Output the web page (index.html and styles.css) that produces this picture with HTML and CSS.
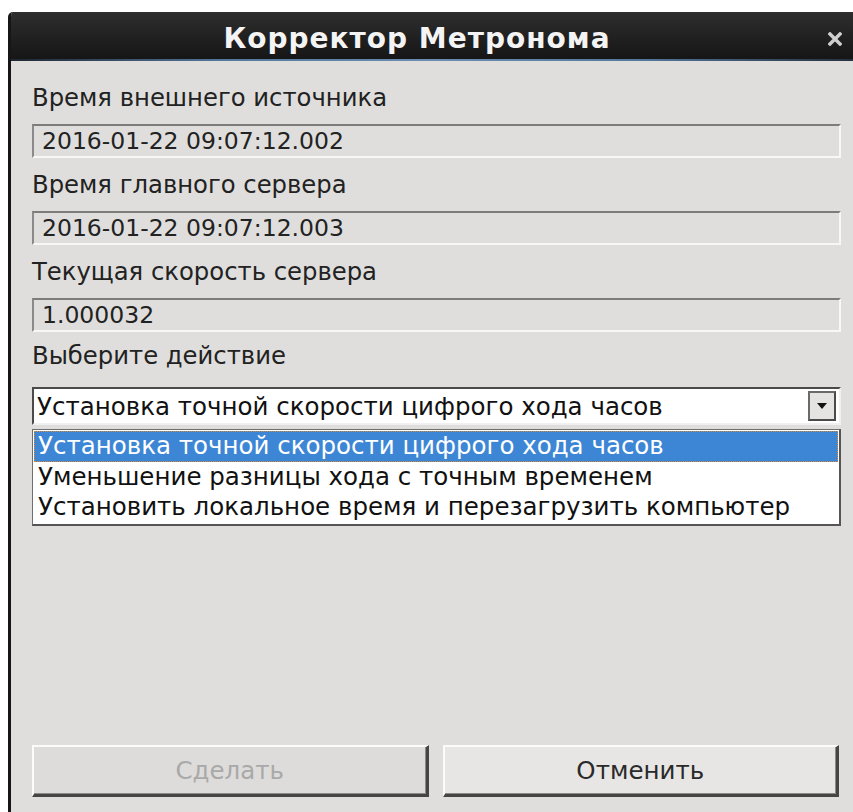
FILE: index.html
```html
<!DOCTYPE html>
<html lang="ru">
<head>
<meta charset="utf-8">
<title>Корректор Метронома</title>
<link rel="stylesheet" href="styles.css">
</head>
<body>
<div class="window">
  <div class="titlebar">
    <span class="title">Корректор Метронома</span>
    <span class="close" aria-label="Закрыть">
      <svg width="14" height="14" viewBox="0 0 14 14"><path d="M2 2 L12 12 M12 2 L2 12" stroke="#cfcfcf" stroke-width="3.4" stroke-linecap="square" fill="none"/></svg>
    </span>
  </div>
  <div class="content">
    <div class="label first">Время внешнего источника</div>
    <div class="field">2016-01-22 09:07:12.002</div>
    <div class="label">Время главного сервера</div>
    <div class="field">2016-01-22 09:07:12.003</div>
    <div class="label">Текущая скорость сервера</div>
    <div class="field">1.000032</div>
    <div class="label action">Выберите действие</div>
    <div class="combo">
      <span class="combo-text">Установка точной скорости цифрого хода часов</span>
      <span class="combo-btn"><svg width="12" height="8" viewBox="0 0 12 8"><path d="M1 1 L11 1 L6 7 Z" fill="#111"/></svg></span>
    </div>
    <ul class="options">
      <li class="selected">Установка точной скорости цифрого хода часов</li>
      <li>Уменьшение разницы хода с точным временем</li>
      <li>Установить локальное время и перезагрузить компьютер</li>
    </ul>
    <div class="buttons">
      <button class="btn disabled" disabled>Сделать</button>
      <button class="btn">Отменить</button>
    </div>
  </div>
</div>
</body>
</html>
```
FILE: styles.css
```css
html, body {
  margin: 0;
  padding: 0;
  background: #ffffff;
}

body {
  font-family: "DejaVu Sans", "Noto Sans", sans-serif;
  color: #222;
}

.window {
  margin: 12px 0 0 8px;
  height: 800px;
  display: flex;
  flex-direction: column;
  background: #dfdedc;
  border-left: 3px solid #161616;
  border-top-left-radius: 5px;
  overflow: hidden;
}

.titlebar {
  height: 47px;
  flex: none;
  display: flex;
  align-items: center;
  justify-content: center;
  position: relative;
  background: linear-gradient(#2e2e2e, #1f1f1f 60%, #161616);
  border-bottom: 2px solid #3b5878;
  border-image: linear-gradient(to right, #1e2630, #54779c 25%, #6b8db2 50%, #54779c 75%, #26313d) 1;
}

.title {
  color: #f4f4f4;
  font-weight: bold;
  font-size: 28px;
  letter-spacing: 1px;
  padding-right: 30px;
  padding-top: 6px;
}

.close {
  position: absolute;
  right: 11px;
  top: 20px;
  display: flex;
}

.content {
  flex: 1;
  display: flex;
  flex-direction: column;
  padding: 0 12px 0 21px;
}

.label {
  font-size: 24.3px;
  line-height: 28px;
  margin-top: 13px;
  color: #222;
}

.label.first {
  margin-top: 23px;
}

.label.action {
  margin-top: 10px;
}

.field {
  margin-top: 12px;
  height: 34px;
  box-sizing: border-box;
  border-top: 2px solid #7c7c7c;
  border-left: 2px solid #8a8a8a;
  border-right: 2px solid #f7f7f7;
  border-bottom: 2px solid #f7f7f7;
  padding: 0 8px;
  font-size: 23.5px;
  line-height: 30px;
  color: #222;
}

.combo {
  margin-top: 17px;
  height: 38px;
  box-sizing: border-box;
  display: flex;
  align-items: center;
  background: #ffffff;
  border-top: 2px solid #4a4a4a;
  border-left: 2px solid #4a4a4a;
  border-right: 2px solid #f0f0f0;
  border-bottom: 2px solid #f0f0f0;
  padding: 0 3px 0 3px;
}

.combo-text {
  flex: 1;
  font-size: 24.5px;
  color: #111;
  white-space: nowrap;
}

.combo-btn {
  width: 28px;
  height: 30px;
  box-sizing: border-box;
  display: flex;
  align-items: center;
  justify-content: center;
  background: #e4e3e1;
  border-top: 2px solid #6a6a6a;
  border-left: 2px solid #6a6a6a;
  border-right: 2px solid #4a4a4a;
  border-bottom: 2px solid #4a4a4a;
}

.options {
  list-style: none;
  margin: 4px 0 0 0;
  padding: 1px;
  background: #ffffff;
  border: 1px solid #6e6e6e;
  border-right: 2px solid #555;
  border-bottom: 2px solid #555;
}

.options li {
  height: 30.5px;
  line-height: 30px;
  font-size: 24.5px;
  color: #111;
  padding-left: 4px;
  white-space: nowrap;
}

.options li.selected {
  background: #3d86d5;
  color: #ffffff;
  outline: 1px dotted #d88a2c;
  outline-offset: -1px;
}

.buttons {
  margin-top: auto;
  margin-bottom: 15px;
  margin-right: 2px;
  display: flex;
  gap: 14px;
}

.btn {
  flex: 1;
  height: 52px;
  font-family: "DejaVu Sans", "Noto Sans", sans-serif;
  font-size: 24.5px;
  color: #2a2a2a;
  background: #e7e6e4;
  border-top: 2px solid #fbfbfb;
  border-left: 2px solid #fbfbfb;
  border-right: 3px solid #454545;
  border-bottom: 3px solid #454545;
  box-shadow: inset -1px -1px 0 #8a8a8a;
  padding: 0;
}

.btn.disabled {
  background: #dddcda;
  color: #a9a9a9;
}
```
